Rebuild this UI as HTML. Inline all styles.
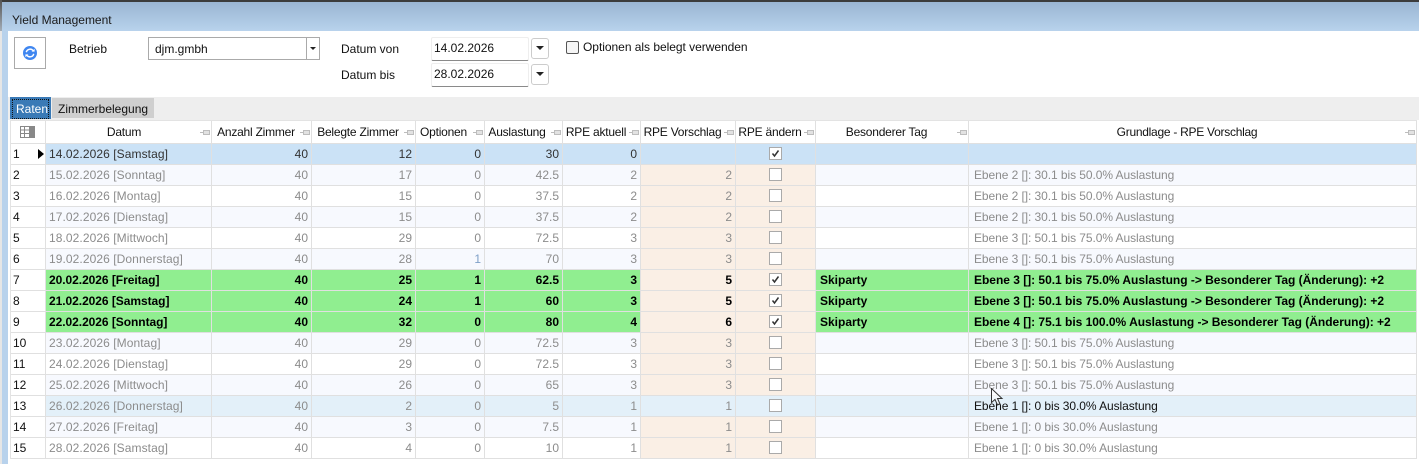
<!DOCTYPE html>
<html lang="de"><head><meta charset="utf-8"><title>Yield Management</title>
<style>
html,body{margin:0;padding:0}
body{width:1419px;height:464px;overflow:hidden;background:#fff;position:relative;font:12px "Liberation Sans",sans-serif;color:#111}
.a{position:absolute}
.t{position:absolute;white-space:nowrap;line-height:16px}
table{position:absolute;left:10px;top:120px;border-collapse:separate;border-spacing:0;table-layout:fixed;width:1407px;border-left:1px solid #e3e3e3;border-top:1px solid #e3e3e3;box-sizing:border-box}
td,th{height:20px;padding:0 3px 0 3px;border-right:1px solid #e0e0e0;border-bottom:1px solid #e0e0e0;font-weight:400;font-size:12px;white-space:nowrap;overflow:hidden;box-sizing:content-box;text-align:right;color:#8c8c8c;line-height:19px}
th{height:22px;color:#111;text-align:center;position:relative;background:#fff;padding:0 13px 0 2px;letter-spacing:-.22px}
th svg{position:absolute;right:1px;top:8px}
td:first-child,th:first-child{background:#fff;color:#111;text-align:left;padding-left:2px}
td:nth-child(2),td:nth-child(10),td:nth-child(11){text-align:left}
td:nth-child(2){letter-spacing:.08px}
td:nth-child(10){padding-left:4px}
td:nth-child(11){padding-left:5px;letter-spacing:-.07px}
tr.o td{background:#f7f9fe}
tr.e td{background:#fff}
tr.b td{background:#e3f0f9}
tr.s td{background:#cbe2f6;color:#333}
tr.g td{background:#90ee90;color:#000;font-weight:700}
tr.g td:nth-child(2){letter-spacing:-.05px}
tr.g td:nth-child(11){letter-spacing:-.02px}
tr td:first-child{background:#fff!important;color:#111!important;font-weight:400!important;position:relative}
tr.o td:nth-child(8),tr.e td:nth-child(8),tr.o td:nth-child(9),tr.e td:nth-child(9),tr.g td:nth-child(8),tr.g td:nth-child(9){background:#faefe5}
tr.g td:nth-child(8){color:#000}
td:nth-child(9){text-align:center;padding:0}
td:nth-child(11).k{color:#111}
.c{display:inline-block;width:11px;height:11px;border:1px solid #aaa;background:#fff;vertical-align:-2px;position:relative}
.c svg{position:absolute;left:0;top:0}
</style></head><body>
<div class="a" style="left:0;top:0;width:1419px;height:31px;background:linear-gradient(#98b3d1,#b8d2ec)"></div>
<div class="a" style="left:0;top:0;width:1419px;height:2px;background:#3c3c3c"></div>
<div class="a" style="left:0;top:0;width:2px;height:31px;background:linear-gradient(#555,#a3adb8)"></div>
<div class="a" style="left:2px;top:31px;width:6px;height:433px;background:#b8d2ec"></div>
<div class="a" style="left:0;top:31px;width:2px;height:433px;background:#e6e6e6"></div>
<div class="t" style="left:12px;top:12px;color:#1a1a1a">Yield Management</div>

<div class="a" style="left:14px;top:37px;width:30px;height:30px;border:1px solid #aaa;background:#fff"></div>
<svg class="a" style="left:22px;top:45px" width="16" height="16" viewBox="0 0 16 16"><circle cx="8" cy="8" r="7" fill="#3f86f0"/><path d="M4.300 7.200A3.800 3.800 0 0 1 11 5.600" fill="none" stroke="#fff" stroke-width="1.400"/><path d="M11.700 8.800A3.800 3.800 0 0 1 5 10.400" fill="none" stroke="#fff" stroke-width="1.400"/><path d="M9.600 6.600h3V3.800zM6.400 9.400h-3v2.800z" fill="#fff"/></svg>
<div class="t" style="left:69px;top:41px">Betrieb</div>
<div class="a" style="left:148px;top:37px;width:170px;height:21px;border:1px solid #aaa;background:#fff"></div>
<div class="a" style="left:306px;top:38px;width:1px;height:21px;background:#aaa"></div>
<div class="a" style="left:310px;top:47px;border:3px solid transparent;border-top:3px solid #222;border-bottom:0;"></div>
<div class="t" style="left:155px;top:41px">djm.gmbh</div>
<div class="t" style="left:341px;top:41px">Datum von</div>
<div class="t" style="left:341px;top:67px">Datum bis</div>

<div class="a" style="left:431px;top:37px;width:96px;height:22px;border:1px solid #eee;border-bottom:1px solid #8a8a8a;border-radius:2px;background:#fff"></div>
<div class="a" style="left:431px;top:63px;width:96px;height:22px;border:1px solid #eee;border-bottom:1px solid #8a8a8a;border-radius:2px;background:#fff"></div>
<div class="t" style="left:434px;top:40px">14.02.2026</div>
<div class="t" style="left:434px;top:66px">28.02.2026</div>
<div class="a" style="left:531px;top:38px;width:16px;height:19px;border:1px solid #ccc;border-radius:3px;background:#fff"></div>
<div class="a" style="left:531px;top:64px;width:16px;height:19px;border:1px solid #ccc;border-radius:3px;background:#fff"></div>
<div class="a" style="left:536px;top:46px;border:4px solid transparent;border-top:4px solid #222;border-bottom:0"></div>
<div class="a" style="left:536px;top:72px;border:4px solid transparent;border-top:4px solid #222;border-bottom:0"></div>
<div class="a" style="left:566px;top:41px;width:11px;height:11px;border:1px solid #555;border-radius:2px;background:#f5f5f5"></div>
<div class="t" style="left:583px;top:39px;letter-spacing:-.03px">Optionen als belegt verwenden</div>

<div class="a" style="left:8px;top:97px;width:1411px;height:23px;background:#eee"></div>
<div class="a" style="left:10px;top:97px;width:41px;height:22px;background:#3a7ab6"></div>
<div class="a" style="left:12px;top:99px;width:35px;height:18px;border:1px dotted #111"></div>
<div class="t" style="left:16px;top:101px;color:#fff">Raten</div>
<div class="a" style="left:52px;top:98px;width:102px;height:20px;background:#cfcfcf"></div>
<div class="t" style="left:58px;top:101px">Zimmerbelegung</div>

<table>
<colgroup><col style="width:35px"><col style="width:166px"><col style="width:100px"><col style="width:104px"><col style="width:69px"><col style="width:78px"><col style="width:78px"><col style="width:95px"><col style="width:80px"><col style="width:153px"><col style="width:448px"></colgroup>
<tr>
<th style="padding:0"><svg style="left:9px;top:5px;right:auto" width="15" height="12" viewBox="0 0 15 12"><rect width="15" height="12" fill="#888"/><path d="M1 1h3v2.500H1zM5 1h4v2.500H5zM1 4.500h3V7H1zM5 4.500h4V7H5zM1 8h3v3H1zM5 8h4v3H5z" fill="#fff"/></svg></th>
<th style="padding-right:11px">Datum<svg width="10" height="7" viewBox="0 0 10 7"><path d="M0 3.500h3.500" stroke="#bdbdbd" fill="none"/><path d="M3.500 1.500h6v4h-6z" fill="#e2e2e2" stroke="#bdbdbd"/></svg></th>
<th>Anzahl Zimmer<svg width="10" height="7" viewBox="0 0 10 7"><path d="M0 3.500h3.500" stroke="#bdbdbd" fill="none"/><path d="M3.500 1.500h6v4h-6z" fill="#e2e2e2" stroke="#bdbdbd"/></svg></th>
<th>Belegte Zimmer<svg width="10" height="7" viewBox="0 0 10 7"><path d="M0 3.500h3.500" stroke="#bdbdbd" fill="none"/><path d="M3.500 1.500h6v4h-6z" fill="#e2e2e2" stroke="#bdbdbd"/></svg></th>
<th style="padding-right:15px">Optionen<svg width="10" height="7" viewBox="0 0 10 7"><path d="M0 3.500h3.500" stroke="#bdbdbd" fill="none"/><path d="M3.500 1.500h6v4h-6z" fill="#e2e2e2" stroke="#bdbdbd"/></svg></th>
<th style="padding-right:15px">Auslastung<svg width="10" height="7" viewBox="0 0 10 7"><path d="M0 3.500h3.500" stroke="#bdbdbd" fill="none"/><path d="M3.500 1.500h6v4h-6z" fill="#e2e2e2" stroke="#bdbdbd"/></svg></th>
<th>RPE aktuell<svg width="10" height="7" viewBox="0 0 10 7"><path d="M0 3.500h3.500" stroke="#bdbdbd" fill="none"/><path d="M3.500 1.500h6v4h-6z" fill="#e2e2e2" stroke="#bdbdbd"/></svg></th>
<th>RPE Vorschlag<svg width="10" height="7" viewBox="0 0 10 7"><path d="M0 3.500h3.500" stroke="#bdbdbd" fill="none"/><path d="M3.500 1.500h6v4h-6z" fill="#e2e2e2" stroke="#bdbdbd"/></svg></th>
<th>RPE ändern<svg width="10" height="7" viewBox="0 0 10 7"><path d="M0 3.500h3.500" stroke="#bdbdbd" fill="none"/><path d="M3.500 1.500h6v4h-6z" fill="#e2e2e2" stroke="#bdbdbd"/></svg></th>
<th>Besonderer Tag<svg width="10" height="7" viewBox="0 0 10 7"><path d="M0 3.500h3.500" stroke="#bdbdbd" fill="none"/><path d="M3.500 1.500h6v4h-6z" fill="#e2e2e2" stroke="#bdbdbd"/></svg></th>
<th style="letter-spacing:-.27px">Grundlage - RPE Vorschlag<svg width="10" height="7" viewBox="0 0 10 7"><path d="M0 3.500h3.500" stroke="#bdbdbd" fill="none"/><path d="M3.500 1.500h6v4h-6z" fill="#e2e2e2" stroke="#bdbdbd"/></svg></th>
</tr>
<tr class="s"><td>1<svg class="a" style="left:27px;top:5px" width="6" height="10" viewBox="0 0 6 10"><path d="M0 0l6 5-6 5z" fill="#000"/></svg></td><td>14.02.2026 [Samstag]</td><td>40</td><td>12</td><td>0</td><td>30</td><td>0</td><td></td><td><span class="c"><svg width="11" height="11" viewBox="0 0 11 11"><path d="M2.500 5.500l2 2.500 4-5.500" fill="none" stroke="#333" stroke-width="1.500"/></svg></span></td><td></td><td></td></tr>
<tr class="o"><td>2</td><td>15.02.2026 [Sonntag]</td><td>40</td><td>17</td><td>0</td><td>42.5</td><td>2</td><td>2</td><td><span class="c"></span></td><td></td><td>Ebene 2 []: 30.1 bis 50.0% Auslastung</td></tr>
<tr class="e"><td>3</td><td>16.02.2026 [Montag]</td><td>40</td><td>15</td><td>0</td><td>37.5</td><td>2</td><td>2</td><td><span class="c"></span></td><td></td><td>Ebene 2 []: 30.1 bis 50.0% Auslastung</td></tr>
<tr class="o"><td>4</td><td>17.02.2026 [Dienstag]</td><td>40</td><td>15</td><td>0</td><td>37.5</td><td>2</td><td>2</td><td><span class="c"></span></td><td></td><td>Ebene 2 []: 30.1 bis 50.0% Auslastung</td></tr>
<tr class="e"><td>5</td><td>18.02.2026 [Mittwoch]</td><td>40</td><td>29</td><td>0</td><td>72.5</td><td>3</td><td>3</td><td><span class="c"></span></td><td></td><td>Ebene 3 []: 50.1 bis 75.0% Auslastung</td></tr>
<tr class="o"><td>6</td><td>19.02.2026 [Donnerstag]</td><td>40</td><td>28</td><td style="color:#7fa0c8">1</td><td>70</td><td>3</td><td>3</td><td><span class="c"></span></td><td></td><td>Ebene 3 []: 50.1 bis 75.0% Auslastung</td></tr>
<tr class="g"><td>7</td><td>20.02.2026 [Freitag]</td><td>40</td><td>25</td><td>1</td><td>62.5</td><td>3</td><td>5</td><td><span class="c"><svg width="11" height="11" viewBox="0 0 11 11"><path d="M2.500 5.500l2 2.500 4-5.500" fill="none" stroke="#333" stroke-width="1.500"/></svg></span></td><td>Skiparty</td><td>Ebene 3 []: 50.1 bis 75.0% Auslastung -&gt; Besonderer Tag (Änderung): +2</td></tr>
<tr class="g"><td>8</td><td>21.02.2026 [Samstag]</td><td>40</td><td>24</td><td>1</td><td>60</td><td>3</td><td>5</td><td><span class="c"><svg width="11" height="11" viewBox="0 0 11 11"><path d="M2.500 5.500l2 2.500 4-5.500" fill="none" stroke="#333" stroke-width="1.500"/></svg></span></td><td>Skiparty</td><td>Ebene 3 []: 50.1 bis 75.0% Auslastung -&gt; Besonderer Tag (Änderung): +2</td></tr>
<tr class="g"><td>9</td><td>22.02.2026 [Sonntag]</td><td>40</td><td>32</td><td>0</td><td>80</td><td>4</td><td>6</td><td><span class="c"><svg width="11" height="11" viewBox="0 0 11 11"><path d="M2.500 5.500l2 2.500 4-5.500" fill="none" stroke="#333" stroke-width="1.500"/></svg></span></td><td>Skiparty</td><td>Ebene 4 []: 75.1 bis 100.0% Auslastung -&gt; Besonderer Tag (Änderung): +2</td></tr>
<tr class="o"><td>10</td><td>23.02.2026 [Montag]</td><td>40</td><td>29</td><td>0</td><td>72.5</td><td>3</td><td>3</td><td><span class="c"></span></td><td></td><td>Ebene 3 []: 50.1 bis 75.0% Auslastung</td></tr>
<tr class="e"><td>11</td><td>24.02.2026 [Dienstag]</td><td>40</td><td>29</td><td>0</td><td>72.5</td><td>3</td><td>3</td><td><span class="c"></span></td><td></td><td>Ebene 3 []: 50.1 bis 75.0% Auslastung</td></tr>
<tr class="o"><td>12</td><td>25.02.2026 [Mittwoch]</td><td>40</td><td>26</td><td>0</td><td>65</td><td>3</td><td>3</td><td><span class="c"></span></td><td></td><td>Ebene 3 []: 50.1 bis 75.0% Auslastung</td></tr>
<tr class="b"><td>13</td><td>26.02.2026 [Donnerstag]</td><td>40</td><td>2</td><td>0</td><td>5</td><td>1</td><td>1</td><td><span class="c"></span></td><td></td><td class="k">Ebene 1 []: 0 bis 30.0% Auslastung</td></tr>
<tr class="o"><td>14</td><td>27.02.2026 [Freitag]</td><td>40</td><td>3</td><td>0</td><td>7.5</td><td>1</td><td>1</td><td><span class="c"></span></td><td></td><td>Ebene 1 []: 0 bis 30.0% Auslastung</td></tr>
<tr class="e"><td>15</td><td>28.02.2026 [Samstag]</td><td>40</td><td>4</td><td>0</td><td>10</td><td>1</td><td>1</td><td><span class="c"></span></td><td></td><td>Ebene 1 []: 0 bis 30.0% Auslastung</td></tr>
</table>
<svg class="a" style="left:991px;top:388px" width="14" height="18" viewBox="0 0 14 18"><path d="M0.500 0.500v14l3.500-3 2.500 5.500 2.500-1-2.500-5.500h4.500z" fill="#fff" fill-opacity=".6" stroke="#333"/></svg>
</body></html>
